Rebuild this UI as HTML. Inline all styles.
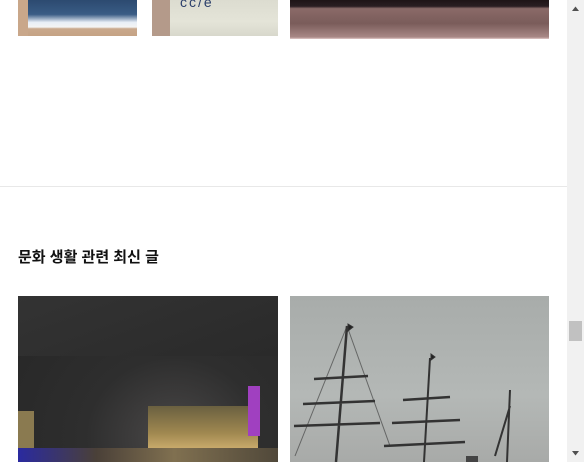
<!DOCTYPE html>
<html><head><meta charset="utf-8"><style>
html,body{margin:0;padding:0;width:584px;height:462px;overflow:hidden;background:#fff;position:relative;font-family:"Liberation Sans","Noto Sans CJK KR",sans-serif}
.a{position:absolute}
</style></head><body>
<div class="a" style="left:18px;top:0;width:119px;height:36px;background:linear-gradient(180deg,#2c4a70 0,#3a5c85 40%,#e8eef6 62%,#f4f4f4 75%,#c9a88c 80%,#c5a385 100%)"></div>
<div class="a" style="left:18px;top:0;width:10px;height:36px;background:#c9a78a"></div>
<div class="a" style="left:152px;top:0;width:126px;height:36px;background:linear-gradient(180deg,#dcdcd0,#e4e4d8 60%,#d8d8cc)"></div>
<div class="a" style="left:152px;top:0;width:18px;height:36px;background:#b49a8a"></div>
<div class="a" style="left:180px;top:-6px;font-size:14px;color:#2a3e6a;letter-spacing:2px">cc/e</div>
<div class="a" style="left:290px;top:0;width:259px;height:39px;background:linear-gradient(180deg,#1e1416 0,#2a1e22 16%,#8a6a68 22%,#7a5c5a 60%,#a88886 95%,#e0c8c8 100%)"></div>
<div class="a" style="left:0;top:186px;width:567px;height:1px;background:#e8e8e8"></div>
<div class="a" style="left:18px;top:246px;font-size:15px;font-weight:bold;color:#111">문화 생활 관련 최신 글</div>
<div class="a" style="left:18px;top:296px;width:260px;height:166px;background:radial-gradient(ellipse at 60% 85%,#4a4848 0,#2e2e2e 40%,#262626 100%);overflow:hidden">
 <div class="a" style="left:0;top:0;width:260px;height:60px;background:linear-gradient(160deg,#333 0,#2a2a2a 100%)"></div>
 <div class="a" style="left:130px;top:110px;width:110px;height:45px;background:linear-gradient(180deg,#6a6040,#a08850 60%,#d0b070)"></div>
 <div class="a" style="left:230px;top:90px;width:12px;height:50px;background:#a040c0"></div>
 <div class="a" style="left:0;top:115px;width:16px;height:45px;background:#8a7a50"></div>
 <div class="a" style="left:0;top:152px;width:260px;height:14px;background:linear-gradient(90deg,#2a2aa0,#4a4038 30%,#807050 60%,#50483a)"></div>
</div>
<div class="a" style="left:290px;top:296px;width:259px;height:166px;background:linear-gradient(180deg,#a8acaa,#b4b8b6 60%,#a8aaa8)"></div>
<svg class="a" style="left:290px;top:296px" width="259" height="166" stroke="#333" fill="none">
<path d="M57 30L46 166M24 83L78 80M13 108L85 105M4 130L90 127" stroke-width="2.5"/>
<path d="M57 30L5 160M57 30L100 150M140 62L134 166M113 104L160 101M102 127L170 124M94 150L175 146" stroke-width="1" opacity=".6"/>
<path d="M140 62L134 166M220 94L217 166M220 110L205 160" stroke-width="2"/>
<path d="M113 104L160 101M102 127L170 124M94 150L175 146" stroke-width="2.5"/>
<path d="M58 28l5 3-5 4z M141 58l4 3-4 3z" fill="#222"/>
<rect x="176" y="160" width="12" height="6" fill="#444" stroke="none"/>
</svg>
<div class="a" style="left:567px;top:0;width:17px;height:462px;background:#f1f1f1"></div>
<svg class="a" style="left:567px;top:0" width="17" height="462"><path d="M5 11L8.5 6.5 12 11z" fill="#505050"/><path d="M5 451L8.5 455.5 12 451z" fill="#505050"/><rect x="2" y="321" width="13" height="20" fill="#c1c1c1"/></svg>
</body></html>
